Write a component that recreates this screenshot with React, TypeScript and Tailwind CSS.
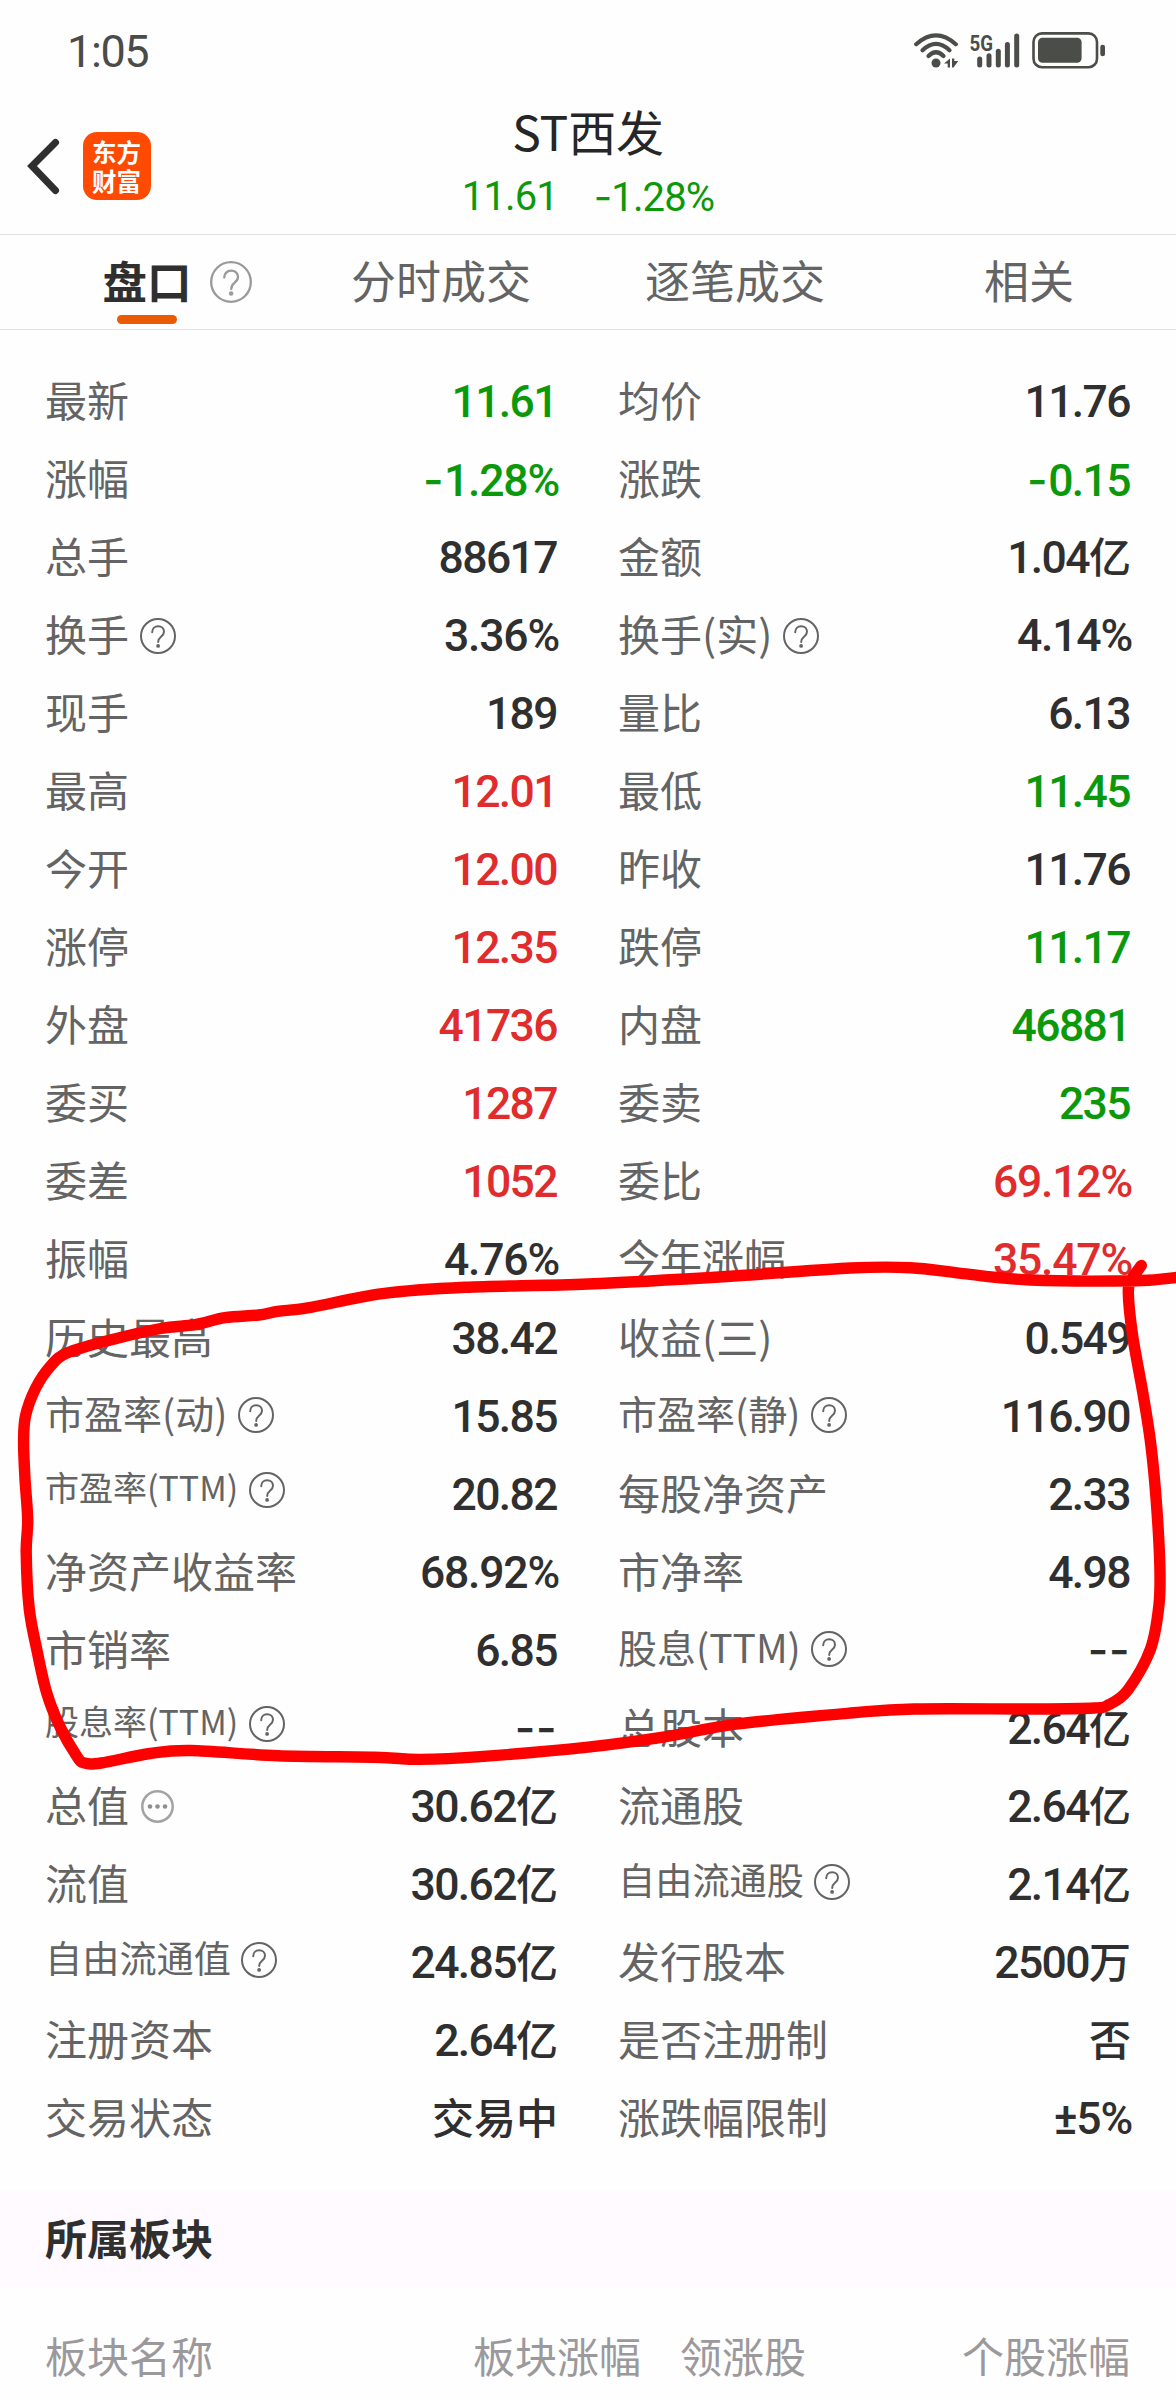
import React from "react";

type Tone = "up" | "down" | "flat";
type Size = "lg" | "md" | "sm" | "xs";
type Cell = { label: string; value: string; tone?: Tone; size?: Size; icon?: "help" | "more" };

const c = (label: string, value: string, tone: Tone = "flat", icon?: "help" | "more", size: Size = "lg"): Cell => ({
  label, value, tone, icon, size,
});

const rows: [Cell, Cell][] = [
  [c("最新", "11.61", "down"), c("均价", "11.76")],
  [c("涨幅", "-1.28%", "down"), c("涨跌", "-0.15", "down")],
  [c("总手", "88617"), c("金额", "1.04亿")],
  [c("换手", "3.36%", "flat", "help"), c("换手(实)", "4.14%", "flat", "help")],
  [c("现手", "189"), c("量比", "6.13")],
  [c("最高", "12.01", "up"), c("最低", "11.45", "down")],
  [c("今开", "12.00", "up"), c("昨收", "11.76")],
  [c("涨停", "12.35", "up"), c("跌停", "11.17", "down")],
  [c("外盘", "41736", "up"), c("内盘", "46881", "down")],
  [c("委买", "1287", "up"), c("委卖", "235", "down")],
  [c("委差", "1052", "up"), c("委比", "69.12%", "up")],
  [c("振幅", "4.76%"), c("今年涨幅", "35.47%", "up")],
  [c("历史最高", "38.42"), c("收益(三)", "0.549")],
  [c("市盈率(动)", "15.85", "flat", "help", "md"), c("市盈率(静)", "116.90", "flat", "help", "md")],
  [c("市盈率(TTM)", "20.82", "flat", "help", "xs"), c("每股净资产", "2.33")],
  [c("净资产收益率", "68.92%"), c("市净率", "4.98")],
  [c("市销率", "6.85"), c("股息(TTM)", "--", "flat", "help", "md")],
  [c("股息率(TTM)", "--", "flat", "help", "xs"), c("总股本", "2.64亿")],
  [c("总值", "30.62亿", "flat", "more"), c("流通股", "2.64亿")],
  [c("流值", "30.62亿"), c("自由流通股", "2.14亿", "flat", "help", "sm")],
  [c("自由流通值", "24.85亿", "flat", "help", "sm"), c("发行股本", "2500万")],
  [c("注册资本", "2.64亿"), c("是否注册制", "否")],
  [c("交易状态", "交易中"), c("涨跌幅限制", "±5%")],
];

const toneClass: Record<Tone, string> = {
  up: "text-[#e02c2c]",
  down: "text-[#0b990b]",
  flat: "text-[#2f2f2f]",
};

const sizeClass: Record<Size, string> = {
  lg: "text-[42px] pb-[4px]",
  md: "text-[39px] pb-[8px]",
  sm: "text-[37.2px] pb-[10px]",
  xs: "text-[34px] pb-[13px]",
};

function HelpIcon({ className }: { className: string }) {
  return (
    <svg viewBox="0 0 36 36" className={className} fill="none" stroke="currentColor" strokeWidth="2">
      <circle cx="18" cy="18" r="17" />
      <path d="M12.2 14.2c0-3.4 2.5-5.9 5.9-5.9s5.9 2.3 5.9 5.4c0 2.5-1.4 3.7-3 5-1.700 1.400-2.800 2.400-2.800 5.300" strokeLinecap="round" />
      <circle cx="18.1" cy="27.9" r="1.9" fill="currentColor" stroke="none" />
    </svg>
  );
}

function MoreIcon() {
  return (
    <svg viewBox="0 0 33 33" className="ml-[12px] mt-[6px] size-[33px] shrink-0 text-[#a3a3a3]">
      <circle cx="16.5" cy="16.5" r="15.2" fill="none" stroke="currentColor" strokeWidth="2.5" />
      <g fill="#8f8f8f">
        <circle cx="9" cy="16.5" r="2.3" />
        <circle cx="16.5" cy="16.5" r="2.3" />
        <circle cx="24" cy="16.5" r="2.3" />
      </g>
    </svg>
  );
}

function Field({ cell }: { cell: Cell }) {
  return (
    <div className="flex h-[78.05px] items-center justify-between whitespace-nowrap">
      <div className={`flex items-center leading-[50px] text-[#646464] ${sizeClass[cell.size ?? "lg"]}`}>
        <span>{cell.label}</span>
        {cell.icon === "help" && <HelpIcon className="ml-[10.5px] mt-[6px] size-[36px] shrink-0" />}
        {cell.icon === "more" && <MoreIcon />}
      </div>
      <Value text={cell.value} tone={cell.tone ?? "flat"} />
    </div>
  );
}

// Splits a value into hyphen, digit and unit runs, which differ in face and size.
function Value({ text, tone }: { text: string; tone: Tone }) {
  const runs = text.match(/-+|[\d.%±]+|[^\d.%±-]+/g) ?? [];
  const spacing = text.endsWith("%")
    ? "-mr-[2px] tracking-[-1.2px]"
    : /[亿万中否]$/.test(text)
      ? "-mr-[1px] tracking-[-1.6px]"
      : "tracking-[-1.6px]";
  return (
    <span className={`whitespace-nowrap pt-[2px] font-[Roboto,sans-serif] text-[44.5px] font-medium leading-[50px] ${spacing} ${toneClass[tone]}`}>
      {runs.map((run) => {
        if (run.startsWith("-")) return <span key={run} className="font-[Inter] tracking-[0.5px]">{run}</span>;
        if (/^[\d.%±]/.test(run)) return <span key={run}>{run}</span>;
        return <span key={run} className="font-['Noto_Sans_CJK_SC'] text-[42px] leading-[0] tracking-normal">{run}</span>;
      })}
    </span>
  );
}

function StatusIcons() {
  return (
    <svg viewBox="910 28 200 42" className="h-[42px] w-[200px]" fill="#4b4d48">
      <g fill="none" stroke="#4b4d48" strokeWidth="4.2" strokeLinecap="round">
        <path d="M916.2 43.2Q936 25.5 955.8 43.2" />
        <path d="M922.5 49.2Q936 36.5 949.5 49.2" />
        <path d="M928.5 55Q936 47.5 943.5 55" />
      </g>
      <circle cx="936" cy="62" r="4.5" />
      <path d="M944 62.5L950 57.5V66.5H947.7V62.5ZM952 57.5H954.3V60H958.3L953.5 66.5H952Z" />
      <text x="969.5" y="49.5" textLength="23.5" lengthAdjust="spacingAndGlyphs" fontFamily="Roboto, sans-serif" fontWeight="700" fontSize="22">5G</text>
      <rect x="977.2" y="55.5" width="5" height="11" rx="2.5" />
      <rect x="986.5" y="52.2" width="5" height="14.3" rx="2.5" />
      <rect x="995.8" y="47.7" width="5" height="18.8" rx="2.5" />
      <rect x="1004.9" y="41" width="5" height="25.5" rx="2.5" />
      <rect x="1014.2" y="32.5" width="5" height="34" rx="2.5" />
      <rect x="1033.5" y="32.4" width="63.5" height="33.8" rx="8.5" fill="none" stroke="#4b4d48" strokeWidth="2.6" />
      <rect x="1038" y="36.7" width="43.6" height="25" rx="4.5" />
      <rect x="1100.3" y="43.7" width="4.7" height="11.5" rx="2.3" />
    </svg>
  );
}

type Pt = [number, number];

const loop: Pt[] = [
  [1180, 1277], [1135.4, 1280.7], [1030.5, 1280], [963, 1273.6], [910.5, 1267.7], [850.5, 1268], [730.5, 1276.2],
  [588, 1284], [465, 1287.3], [382.5, 1293.6], [311, 1307.3], [277.5, 1311.4], [258.7, 1315], [225, 1317.7],
  [195, 1324.7], [161, 1328.5], [112.5, 1339.5], [67.5, 1352.8], [50.6, 1366], [35.6, 1388.3], [25.5, 1416],
  [23.6, 1442], [25, 1479], [27.7, 1519.7], [26.2, 1553], [29.2, 1608.5], [37.5, 1652.9], [46.9, 1693.5],
  [60, 1726.8], [76.9, 1756.4], [84.4, 1763], [101.2, 1763], [150, 1753.5], [191, 1750.5], [277.5, 1755.7],
  [375, 1757.2], [420, 1759.4], [483.7, 1756.4], [588, 1747.2], [663, 1737.2], [738, 1723.9], [850.5, 1713],
  [914, 1709], [1038, 1709], [1094.2, 1708], [1109, 1704.6], [1128, 1689.8], [1150.5, 1649], [1159, 1604.7],
  [1159.8, 1564], [1156, 1497.5], [1150.5, 1442], [1143, 1393.9], [1132.5, 1334.7], [1128.3, 1292.1],
  [1131.7, 1279.2], [1141.3, 1265.5],
];

// Catmull-Rom spline through the pen samples, emitted as cubic segments.
function smooth(pts: Pt[]) {
  let d = `M${pts[0][0]} ${pts[0][1]}`;
  for (let i = 0; i < pts.length - 1; i++) {
    const p0 = pts[Math.max(0, i - 1)];
    const p1 = pts[i];
    const p2 = pts[i + 1];
    const p3 = pts[Math.min(pts.length - 1, i + 2)];
    d += `C${p1[0] + (p2[0] - p0[0]) / 6} ${p1[1] + (p2[1] - p0[1]) / 6} ${p2[0] - (p3[0] - p1[0]) / 6} ${p2[1] - (p3[1] - p1[1]) / 6} ${p2[0]} ${p2[1]}`;
  }
  return d;
}

function PenMark() {
  return (
    <svg viewBox="0 0 1176 2400" className="pointer-events-none absolute inset-0 h-[2400px] w-[1176px]">
      <path d={smooth(loop)} fill="none" stroke="#ff0000" strokeWidth="11.4" strokeLinecap="round" strokeLinejoin="round" />
    </svg>
  );
}

export default function App() {
  return (
    <div className="relative flex h-[2400px] w-[1176px] flex-col overflow-hidden bg-[#fefefe] font-['Noto_Sans_CJK_SC',sans-serif]">
      <div className="flex h-[100px] items-center justify-between pl-[67px] pr-[66px]">
        <span className="pt-[3px] font-[Roboto] text-[45px] leading-none tracking-[-1.4px] text-[#4b4b49]">1:05</span>
        <StatusIcons />
      </div>

      <header className="grid h-[135px] grid-cols-[1fr_auto_1fr] border-b border-[#e2e2e2]">
        <div className="flex items-start pl-[24px] pt-[32px]">
          <svg viewBox="0 0 36 68" className="h-[68px] w-[36px]" fill="none" stroke="#2f2f2f" strokeWidth="7">
            <path d="M31.5 10.5L8 34L31.5 58.500" strokeLinecap="round" strokeLinejoin="miter" />
          </svg>
          <div className="ml-[23px] flex size-[68px] items-center justify-center rounded-[14px] bg-[#ff4a03]">
            <span className="w-[50px] break-all text-[24.5px] font-bold leading-[29px] text-white">东方财富</span>
          </div>
        </div>
        <div className="flex flex-col items-center">
          <h1 className="text-[48px] leading-[60px] tracking-[-0.2px] text-[#262626]">ST西发</h1>
          <div className="mt-[7px] flex gap-[36px] whitespace-pre font-[Roboto] text-[40px] leading-[60px] tracking-[-0.9px] text-[#0b990b]">
            <span>11.61</span>
            <span><span className="font-[Inter]">-</span>1.28%</span>
          </div>
        </div>
        <div />
      </header>

      <nav className="grid h-[95px] grid-cols-4 border-b border-[#e2e2e2] text-[45px] text-[#646464]">
        <div className="relative flex flex-col items-center">
          <span className="mt-[15px] text-[44.5px] font-bold leading-[60px] text-[#2f2f2f]">盘口</span>
          <HelpIcon className="absolute left-[210px] top-[26px] size-[42px] text-[#9a9a9a]" />
          <span className="mt-[5px] h-[9px] w-[60px] rounded-full bg-[#eb5a05]" />
        </div>
        {["分时成交", "逐笔成交", "相关"].map((t) => (
          <div key={t} className="flex justify-center pt-[15px] leading-[60px]">{t}</div>
        ))}
      </nav>

      <main className="mt-[32px] grid grid-cols-2 gap-x-[61px] pl-[45px] pr-[46px]">
        {rows.map(([a, b]) => (
          <React.Fragment key={a.label}>
            <Field cell={a} />
            <Field cell={b} />
          </React.Fragment>
        ))}
      </main>

      <h2 className="mt-[33px] flex h-[96px] shrink-0 items-center bg-[#fefaff] pb-[4px] pl-[45px] text-[42px] font-bold text-[#2f2f2f]">所属板块</h2>

      <div className="flex h-[114px] items-start pl-[45px] pr-[46px] pt-[39px] text-[42px] leading-[60px] text-[#9b999b]">
        <span className="w-[428px]">板块名称</span>
        <span className="w-[207px]">板块涨幅</span>
        <span>领涨股</span>
        <span className="ml-auto">个股涨幅</span>
      </div>

      <PenMark />
    </div>
  );
}
